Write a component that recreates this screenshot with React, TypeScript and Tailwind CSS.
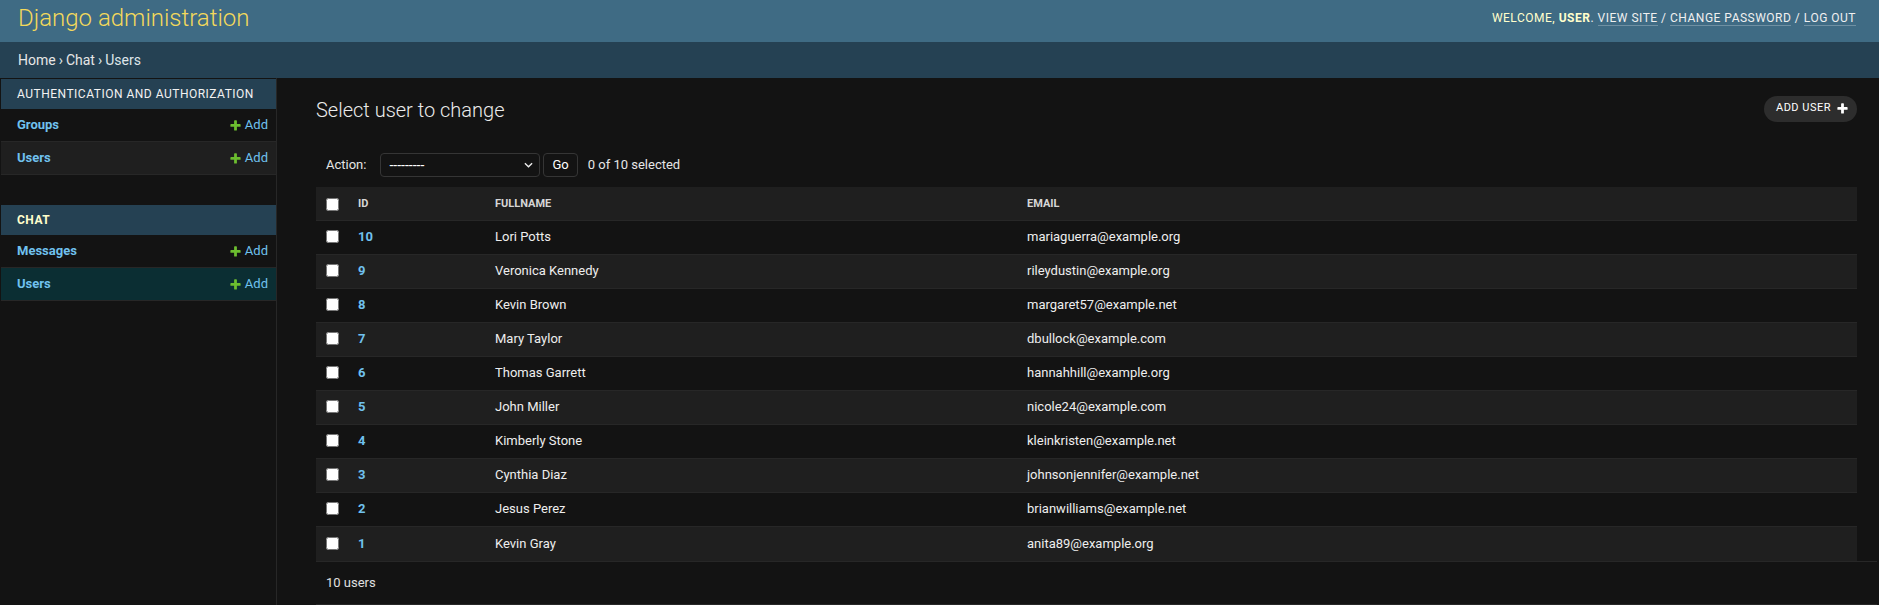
import React from 'react';

const users = [
  { id: 10, name: 'Lori Potts', email: 'mariaguerra@example.org' },
  { id: 9, name: 'Veronica Kennedy', email: 'rileydustin@example.org' },
  { id: 8, name: 'Kevin Brown', email: 'margaret57@example.net' },
  { id: 7, name: 'Mary Taylor', email: 'dbullock@example.com' },
  { id: 6, name: 'Thomas Garrett', email: 'hannahhill@example.org' },
  { id: 5, name: 'John Miller', email: 'nicole24@example.com' },
  { id: 4, name: 'Kimberly Stone', email: 'kleinkristen@example.net' },
  { id: 3, name: 'Cynthia Diaz', email: 'johnsonjennifer@example.net' },
  { id: 2, name: 'Jesus Perez', email: 'brianwilliams@example.net' },
  { id: 1, name: 'Kevin Gray', email: 'anita89@example.org' },
];

const apps = [
  {
    name: 'Authentication and Authorization',
    current: false,
    models: [
      { name: 'Groups', selected: false, striped: false },
      { name: 'Users', selected: false, striped: true },
    ],
  },
  {
    name: 'Chat',
    current: true,
    models: [
      { name: 'Messages', selected: false, striped: false },
      { name: 'Users', selected: true, striped: false },
    ],
  },
];

// plus icon from the admin static files (font awesome plus)
function PlusIcon({ className }: { className?: string }) {
  return (
    <svg viewBox="0 0 1792 1792" className={className}>
      <path
        fill="currentColor"
        d="M1600 796v192q0 40-28 68t-68 28h-416v416q0 40-28 68t-68 28h-192q-40 0-68-28t-28-68v-416h-416q-40 0-68-28t-28-68v-192q0-40 28-68t68-28h416v-416q0-40 28-68t68-28h192q40 0 68 28t28 68v416h416q40 0 68 28t28 68z"
      />
    </svg>
  );
}

function Sidebar() {
  return (
    <nav className="w-[277px] shrink-0 border-r border-[#272727] pl-px pt-px">
      {apps.map((app) => (
        <div key={app.name} className="mb-[30px]">
          <div
            className={`h-[30px] flex items-center pl-[16px] bg-[#254153] text-[12px] uppercase tracking-[0.5px] ${
              app.current ? 'font-bold text-[#ffffcc]' : 'text-[#f2f2f2]'
            }`}
          >
            {app.name}
          </div>
          {app.models.map((m) => (
            <div
              key={m.name}
              className={`h-[33px] flex items-center justify-between pl-[16px] pr-[8px] border-b border-[#272727] text-[13px] ${
                m.selected ? 'bg-[#0b2e33]' : m.striped ? 'bg-[#1f1f1f]' : 'bg-[#131313]'
              }`}
            >
              <a className="font-bold text-[#70c1ee]">{m.name}</a>
              <a className="flex items-center text-[#70c1ee]">
                <PlusIcon className="w-[13px] h-[13px] mr-[3px] text-[#6cbd2f]" />
                Add
              </a>
            </div>
          ))}
        </div>
      ))}
    </nav>
  );
}

export default function App() {
  return (
    <div className="min-h-screen bg-[#131313] text-[#eeeeee] font-['Roboto',sans-serif]">
      {/* header */}
      <div className="h-[42px] flex items-center justify-between pl-[18px] pr-[23px] pb-[6px] bg-[#3f6b84]">
        <h1 className="text-[24px] leading-[24px] font-light text-[#f4d95b]">Django administration</h1>
        <div className="text-[12px] uppercase tracking-[0.5px] text-[#f0f0f0]">
          <span className="text-[#ffffcc]">
            Welcome, <strong className="font-bold">user</strong>
          </span>
          .{' '}
          <a className="border-b border-white/25">View site</a> /{' '}
          <a className="border-b border-white/25">Change password</a> /{' '}
          <a className="border-b border-white/25">Log out</a>
        </div>
      </div>

      {/* breadcrumbs */}
      <div className="h-[36px] flex items-center pl-[18px] bg-[#254153] text-[14px] text-[#dfe6ea]">
        <a className="text-[#e6e6e6]">Home</a>
        <span className="mx-[3px]">›</span>
        <a className="text-[#e6e6e6]">Chat</a>
        <span className="mx-[3px]">›</span>
        <span>Users</span>
      </div>

      <div className="flex min-h-[527px]">
        <Sidebar />

        <div className="flex-1 min-w-0 pl-[39px] pr-[22px] pt-[20px]">
          <div className="flex items-start justify-between">
            <h1 className="text-[20px] leading-[24px] font-light text-[#ebebeb]">Select user to change</h1>
            <a className="-mt-[2px] h-[26px] flex items-center pl-[12px] pr-[8px] pb-px rounded-full bg-[#2d2d2d] text-[11px] uppercase tracking-[0.5px] text-white">
              Add user
              <PlusIcon className="w-[13px] h-[13px] ml-[5px] text-white" />
            </a>
          </div>

          {/* actions */}
          <div className="mt-[21px] h-[44px] flex items-center px-[10px] text-[13px] text-[#e6e6e6]">
            <span>Action:</span>
            <div className="ml-[14px] w-[160px] h-[24px] flex items-center justify-between pl-[8px] pr-[6px] border border-[#353535] rounded-[4px] text-[14px] text-white">
              <span className="leading-none">---------</span>
              <svg viewBox="0 0 10 6" className="w-[9px] h-[6px]">
                <path d="M1 1l4 4 4-4" fill="none" stroke="#eeeeee" strokeWidth="1.5" />
              </svg>
            </div>
            <button className="ml-[3px] h-[24px] px-[8px] border border-[#353535] rounded-[4px] text-[13px] text-white">
              Go
            </button>
            <span className="ml-[10px]">0 of 10 selected</span>
          </div>

          {/* results */}
          <div className="text-[13px]">
            <div className="grid grid-cols-[32px_137px_532px_1fr] h-[34px] items-center pt-[2px] bg-[#1f1f1f] border-b border-[#272727] text-[11px] font-bold uppercase text-[#d6d6d6]">
              <div className="pl-[10px] flex items-center">
                <input type="checkbox" className="m-0 w-[13px] h-[13px]" />
              </div>
              <div className="pl-[10px]">ID</div>
              <div className="pl-[10px]">Fullname</div>
              <div className="pl-[10px]">Email</div>
            </div>
            {users.map((u, i) => (
              <div
                key={u.id}
                className={`grid grid-cols-[32px_137px_532px_1fr] h-[34px] items-center pb-[2px] leading-[17px] ${
                  i % 2 === 0 ? 'bg-[#131313]' : 'bg-[#1f1f1f]'
                } ${i === users.length - 1 ? '' : 'border-b border-[#272727]'}`}
              >
                <div className="pl-[10px] flex items-center">
                  <input type="checkbox" className="m-0 w-[13px] h-[13px]" />
                </div>
                <div className="pl-[10px]">
                  <a className="font-bold text-[#70c1ee]">{u.id}</a>
                </div>
                <div className="pl-[10px] text-[#eeeeee]">{u.name}</div>
                <div className="pl-[10px] text-[#eeeeee]">{u.email}</div>
              </div>
            ))}
          </div>

          {/* paginator */}
          <div className="-mr-[20px] border-y border-[#272727] py-[10px] pl-[10px] leading-[22px] text-[13px] text-[#e0e0e0]">
            10 users
          </div>
        </div>
      </div>
    </div>
  );
}
